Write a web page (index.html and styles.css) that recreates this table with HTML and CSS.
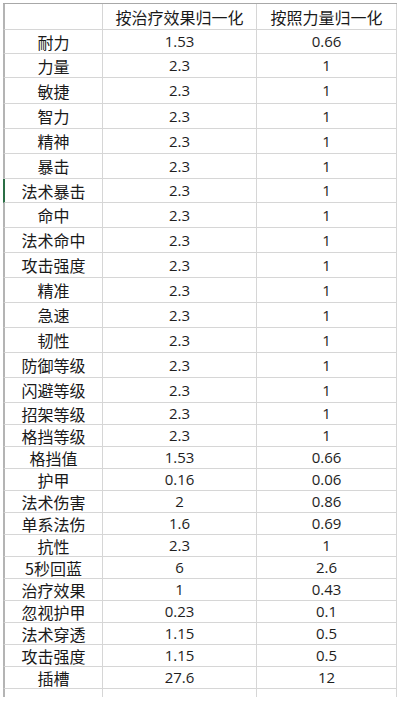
FILE: index.html
```html
<!DOCTYPE html>
<html lang="zh-CN">
<head>
<meta charset="utf-8">
<title>属性归一化</title>
<link rel="stylesheet" href="styles.css">
</head>
<body>
<div class="sheet">
  <div class="row h26 head"><div class="cell name"></div><div class="cell">按治疗效果归一化</div><div class="cell">按照力量归一化</div></div>
  <div class="row h24"><div class="cell name">耐力</div><div class="cell num">1.53</div><div class="cell num">0.66</div></div>
  <div class="row h24"><div class="cell name">力量</div><div class="cell num">2.3</div><div class="cell num">1</div></div>
  <div class="row h26"><div class="cell name">敏捷</div><div class="cell num">2.3</div><div class="cell num">1</div></div>
  <div class="row h25"><div class="cell name">智力</div><div class="cell num">2.3</div><div class="cell num">1</div></div>
  <div class="row h25"><div class="cell name">精神</div><div class="cell num">2.3</div><div class="cell num">1</div></div>
  <div class="row h25"><div class="cell name">暴击</div><div class="cell num">2.3</div><div class="cell num">1</div></div>
  <div class="row h24 selected"><div class="cell name">法术暴击</div><div class="cell num">2.3</div><div class="cell num">1</div></div>
  <div class="row h25"><div class="cell name">命中</div><div class="cell num">2.3</div><div class="cell num">1</div></div>
  <div class="row h25"><div class="cell name">法术命中</div><div class="cell num">2.3</div><div class="cell num">1</div></div>
  <div class="row h25"><div class="cell name">攻击强度</div><div class="cell num">2.3</div><div class="cell num">1</div></div>
  <div class="row h25"><div class="cell name">精准</div><div class="cell num">2.3</div><div class="cell num">1</div></div>
  <div class="row h25"><div class="cell name">急速</div><div class="cell num">2.3</div><div class="cell num">1</div></div>
  <div class="row h25"><div class="cell name">韧性</div><div class="cell num">2.3</div><div class="cell num">1</div></div>
  <div class="row h25"><div class="cell name">防御等级</div><div class="cell num">2.3</div><div class="cell num">1</div></div>
  <div class="row h25"><div class="cell name">闪避等级</div><div class="cell num">2.3</div><div class="cell num">1</div></div>
  <div class="row h22"><div class="cell name">招架等级</div><div class="cell num">2.3</div><div class="cell num">1</div></div>
  <div class="row h22"><div class="cell name">格挡等级</div><div class="cell num">2.3</div><div class="cell num">1</div></div>
  <div class="row h22"><div class="cell name">格挡值</div><div class="cell num">1.53</div><div class="cell num">0.66</div></div>
  <div class="row h22"><div class="cell name">护甲</div><div class="cell num">0.16</div><div class="cell num">0.06</div></div>
  <div class="row h22"><div class="cell name">法术伤害</div><div class="cell num">2</div><div class="cell num">0.86</div></div>
  <div class="row h22"><div class="cell name">单系法伤</div><div class="cell num">1.6</div><div class="cell num">0.69</div></div>
  <div class="row h22"><div class="cell name">抗性</div><div class="cell num">2.3</div><div class="cell num">1</div></div>
  <div class="row h22"><div class="cell name">5秒回蓝</div><div class="cell num">6</div><div class="cell num">2.6</div></div>
  <div class="row h22"><div class="cell name">治疗效果</div><div class="cell num">1</div><div class="cell num">0.43</div></div>
  <div class="row h22"><div class="cell name">忽视护甲</div><div class="cell num">0.23</div><div class="cell num">0.1</div></div>
  <div class="row h22"><div class="cell name">法术穿透</div><div class="cell num">1.15</div><div class="cell num">0.5</div></div>
  <div class="row h22"><div class="cell name">攻击强度</div><div class="cell num">1.15</div><div class="cell num">0.5</div></div>
  <div class="row h22"><div class="cell name">插槽</div><div class="cell num">27.6</div><div class="cell num">12</div></div>
  <div class="row tail"><div class="cell name"></div><div class="cell"></div><div class="cell"></div></div>
</div>
</body>
</html>
```

FILE: styles.css
```css
html, body {
  margin: 0;
  padding: 0;
  background: #ffffff;
}

body {
  font-family: "Noto Sans CJK SC", "Open Sans", sans-serif;
  font-size: 16px;
  color: #1a1a1a;
}

.sheet {
  margin: 3px 0 0 3px;
  width: 394px;
  border-top: 1px solid #a8a8a8;
}

.row {
  display: grid;
  grid-template-columns: 98px 154px 140px;
  box-sizing: border-box;
  border-left: 2px solid #b4b4b4;
  border-bottom: 1px solid #d6d6d6;
}

.row.selected {
  border-left-color: #2b6e45;
}

.cell {
  box-sizing: border-box;
  border-right: 1px solid #d6d6d6;
  display: flex;
  align-items: center;
  justify-content: center;
  white-space: nowrap;
  line-height: 1;
}

.num {
  font-family: "Open Sans", "Noto Sans", sans-serif;
  font-size: 15px;
  color: #1e1e1e;
}

.h22 { height: 22px; }
.h24 { height: 24px; }
.h25 { height: 25px; }
.h26 { height: 26px; }

.row.tail {
  height: 8px;
  border-bottom: none;
}
```
